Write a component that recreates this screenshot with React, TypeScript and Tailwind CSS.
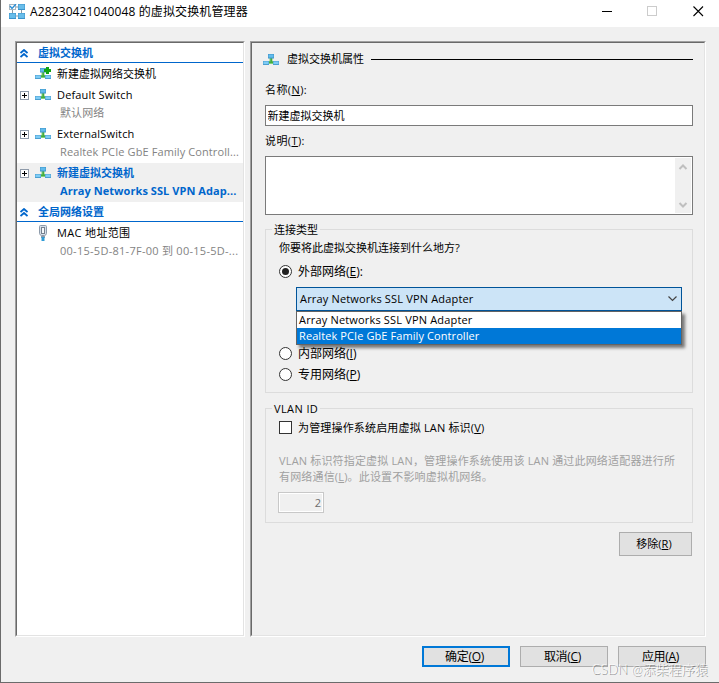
import { useState } from "react";
import type { ReactNode } from "react";

const adapters = ["Array Networks SSL VPN Adapter", "Realtek PCIe GbE Family Controller"];

function SwitchIcon({ plus = false }: { plus?: boolean }) {
    return (
        <svg width="16" height="14" viewBox="0 0 16 14" className="block shrink-0">
            <path d="M6.500 5h3v3h2v3h-7V8h2z" fill="#7fd07a" />
            <path d="M7.500 5h1.500v3.500h2v1.500H5V8.500h2.500z" fill="#45ab40" />
            <rect x="5" y="1" width="6" height="4.500" fill="#3f94c9" />
            <rect x="5.500" y="1.500" width="5" height="3" fill="#62bbec" />
            <rect x="0" y="8" width="6" height="4" fill="#4b9fd0" />
            <rect x="0.500" y="8.500" width="5" height="2.500" fill="#7fccf5" />
            <rect x="10" y="8" width="6" height="4" fill="#4b9fd0" />
            <rect x="10.500" y="8.500" width="5" height="2.500" fill="#7fccf5" />
            {plus && <path d="M11 0h3v2h2v3h-2v2h-3V5H9V2h2z" fill="#12a514" />}
        </svg>
    );
}

function ManagerIcon() {
    return (
        <svg width="16" height="15" viewBox="0 0 16 15" className="block shrink-0">
            <path d="M3.500 6v4M12.500 5v5M6 12h4M6 3h4" stroke="#8a9aa5" strokeWidth="1" fill="none" />
            <rect x="0.5" y="0.5" width="6" height="5" fill="#fff" stroke="#a9b8c2" />
            <path d="M1 2l2 2.500L7 0" stroke="#2d8fd5" strokeWidth="1.400" fill="none" />
            <rect x="9" y="0" width="7" height="6" fill="#3c93cb" />
            <rect x="9.500" y="0.500" width="6" height="4.500" fill="#69bdea" />
            <rect x="0" y="9" width="7" height="6" fill="#3c93cb" />
            <rect x="0.500" y="9.500" width="6" height="4.500" fill="#69bdea" />
            <rect x="9" y="9" width="7" height="6" fill="#3c93cb" />
            <rect x="9.500" y="9.500" width="6" height="4.500" fill="#69bdea" />
        </svg>
    );
}

function PlugIcon() {
    return (
        <svg width="16" height="16" viewBox="0 0 16 16" className="block shrink-0">
            <path d="M4.500 1.500q0-1 1-1h5q1 0 1 1v7q0 1.500-2 2h-3q-2-.5-2-2z" fill="#d5dee8" stroke="#8d9aaa" />
            <rect x="6.500" y="2.500" width="3" height="6" fill="#f4f7fa" stroke="#76818f" />
            <rect x="6" y="11" width="4" height="2" fill="#8d9aaa" />
            <rect x="6.500" y="12" width="3" height="4" fill="#2f9bd6" />
        </svg>
    );
}

function Expander() {
    return (
        <svg width="9" height="9" viewBox="0 0 9 9" className="block shrink-0">
            <rect x="0.5" y="0.5" width="8" height="8" fill="#fff" stroke="#8f9baa" />
            <path d="M2 4.500h5M4.500 2v5" stroke="#000" />
        </svg>
    );
}

function SectionHeader({ children }: { children: ReactNode }) {
    return (
        <div className="flex h-5 items-center border-b border-[#0066cc] pt-px pl-[3px] font-bold text-[#0066cc]">
            <svg width="8" height="9" viewBox="0 0 8 9" className="mr-[10px] block shrink-0">
                <path d="M0.500 4L4 1L7.500 4M0.500 8L4 5L7.500 8" stroke="#0066cc" strokeWidth="1.800" fill="none" />
            </svg>
            {children}
        </div>
    );
}

type TreeItemProps = {
    icon: ReactNode;
    title: ReactNode;
    sub: ReactNode;
    expandable?: boolean;
    selected?: boolean;
};

function TreeItem({ icon, title, sub, expandable, selected }: TreeItemProps) {
    return (
        <div className={selected ? "h-[39px] bg-[#f0f0f0] font-bold text-[#0066cc]" : "h-[39px]"}>
            <div className="flex h-5 items-center pl-[3px]">
                <div className="w-[15px]">{expandable && <Expander />}</div>
                {icon}
                <span className={selected ? "ml-[6px]" : "ml-[6px] tracking-[0.15px]"}>{title}</span>
            </div>
            <div className={selected ? "h-[17px] pl-[43px] leading-[15px] tracking-[0.06px]" : "h-[17px] pl-[43px] leading-[15px] tracking-[0.1px] text-[#838383]"}>
                {sub}
            </div>
        </div>
    );
}

function Panel({ className, children }: { className: string; children: ReactNode }) {
    return (
        <div className={"border border-t-[#a0a0a0] border-r-white border-b-white border-l-[#a0a0a0] " + className}>
            <div className="h-full border border-t-[#696969] border-r-[#e3e3e3] border-b-[#e3e3e3] border-l-[#696969]">
                {children}
            </div>
        </div>
    );
}

function Radio({ checked, onClick, children }: { checked: boolean; onClick: () => void; children: ReactNode }) {
    return (
        <button onClick={onClick} className="flex h-[21px] items-center text-xs">
            <span className="mr-[6px] flex size-[13px] items-center justify-center rounded-full border border-[#333] bg-white">
                {checked && <span className="size-[7px] rounded-full bg-[#222]"></span>}
            </span>
            <span>{children}</span>
        </button>
    );
}

function App() {
    const [network, setNetwork] = useState("external");
    const [name, setName] = useState("新建虚拟交换机");
    const [hovered, setHovered] = useState(1);

    return (
        <div className="flex h-[683px] w-[719px] flex-col overflow-hidden border-b border-l border-[#6b6b6b] bg-[#f0f0f0] font-['Open_Sans','Noto_Sans_CJK_SC',sans-serif] text-[11px] whitespace-nowrap text-black">
            <div className="flex h-[27px] shrink-0 items-start bg-white">
                <div className="flex h-[23px] flex-1 items-center pl-2 text-xs tracking-[0.12px]">
                    <ManagerIcon />
                    <span className="ml-[5px]">A28230421040048 的虚拟交换机管理器</span>
                </div>
                <svg width="118" height="23" viewBox="0 0 118 23" className="block">
                    <path d="M1 11.500h10" stroke="#000" />
                    <rect x="46.500" y="6.500" width="9" height="9" fill="none" stroke="#ccc" />
                    <path d="M92.500 6.500l9.500 9.500M102 6.500l-9.500 9.500" stroke="#000" strokeWidth="1.100" />
                </svg>
            </div>

            <div className="mt-[14px] flex h-[596px] shrink-0 gap-x-[5px] pl-[14px]">
                <Panel className="w-[230px] bg-white">
                    <SectionHeader>虚拟交换机</SectionHeader>
                    <div className="flex h-[22px] items-center pl-[18px]">
                        <SwitchIcon plus />
                        <span className="ml-[6px]">新建虚拟网络交换机</span>
                    </div>
                    <TreeItem expandable icon={<SwitchIcon />} title="Default Switch" sub="默认网络" />
                    <TreeItem expandable icon={<SwitchIcon />} title="ExternalSwitch" sub="Realtek PCIe GbE Family Controll..." />
                    <TreeItem expandable selected icon={<SwitchIcon />} title="新建虚拟交换机" sub="Array Networks SSL VPN Adap..." />
                    <SectionHeader>全局网络设置</SectionHeader>
                    <div className="pt-px">
                        <TreeItem
                            icon={<PlugIcon />}
                            title={<span className="tracking-[0.35px]">MAC 地址范围</span>}
                            sub={<span className="tracking-[0.27px]">00-15-5D-81-7F-00 到 00-15-5D-...</span>}
                        />
                    </div>
                </Panel>

                <Panel className="w-[456px]">
                    <div className="flex h-full flex-col pr-[11px] pl-[13px]">
                        <div className="-ml-[2px] flex h-[33px] shrink-0 items-center">
                            <SwitchIcon />
                            <span className="ml-[8px]">虚拟交换机属性</span>
                            <span className="ml-[7px] h-px flex-1 bg-black"></span>
                        </div>

                        <label className="mt-[4px] h-[20px] leading-[20px] tracking-[0.4px]">名称(<u>N</u>):</label>
                        <input
                            value={name}
                            onChange={(e) => setName(e.target.value)}
                            className="mt-[5px] h-[21px] shrink-0 border border-[#7a7a7a] bg-white px-[1.500px] pb-[2px] outline-none"
                        />
                        <label className="mt-[5px] h-[20px] leading-[20px] tracking-[0.4px]">说明(<u>T</u>):</label>
                        <div className="mt-[5px] flex h-[59px] shrink-0 border border-[#7a7a7a] bg-white p-px">
                            <textarea className="flex-1 resize-none outline-none"></textarea>
                            <svg width="16" height="55" viewBox="0 0 16 55" className="block bg-[#f0f0f0]">
                                <path d="M4.500 11L8 7.500L11.500 11M4.500 45L8 48.500L11.500 45" stroke="#bfbfbf" strokeWidth="2" fill="none" />
                            </svg>
                        </div>

                        <div className="mt-[14px] h-[164px] shrink-0 border border-[#dcdcdc] px-[13px]">
                            <div className="-mt-[9px] -ml-[7px] w-fit bg-[#f0f0f0] px-[2px] leading-[18px]">连接类型</div>
                            <div className="h-[18px] leading-[18px]">你要将此虚拟交换机连接到什么地方?</div>
                            <div className="mt-[4px]">
                                <Radio checked={network === "external"} onClick={() => setNetwork("external")}>
                                    外部网络(<u>E</u>):
                                </Radio>
                            </div>
                            <div className="relative mt-[5px] -mr-[3px] ml-[17px] flex h-6 items-center justify-between border border-[#005499] bg-[#cce4f7] pr-1 pl-[3px] tracking-[0.17px]">
                                {adapters[0]}
                                <svg width="9" height="6" viewBox="0 0 9 6" className="block">
                                    <path d="M0.500 0.500L4.500 4.500L8.500 0.500" stroke="#444" strokeWidth="1.200" fill="none" />
                                </svg>
                                <div className="absolute top-[23px] -right-px -left-px border border-[#646464] bg-white shadow-[3px_3px_3px_rgba(0,0,0,0.5)]">
                                    {adapters.map((adapter, i) => (
                                        <div
                                            key={adapter}
                                            onMouseEnter={() => setHovered(i)}
                                            className={i === hovered ? "h-4 bg-[#0078d7] pl-[2px] leading-4 tracking-[0.09px] text-white" : "h-4 pl-[2px] leading-4"}
                                        >
                                            {adapter}
                                        </div>
                                    ))}
                                </div>
                            </div>
                            <div className="mt-[32px]">
                                <Radio checked={network === "internal"} onClick={() => setNetwork("internal")}>
                                    内部网络(<u>I</u>)
                                </Radio>
                                <Radio checked={network === "private"} onClick={() => setNetwork("private")}>
                                    专用网络(<u>P</u>)
                                </Radio>
                            </div>
                        </div>

                        <div className="mt-[15px] h-[115px] shrink-0 border border-[#dcdcdc] px-[13px]">
                            <div className="-mt-[9px] -ml-[7px] w-fit bg-[#f0f0f0] px-[2px] leading-[18px] tracking-[0.4px]">VLAN ID</div>
                            <div className="flex h-[19px] items-center">
                                <span className="mr-[6px] size-[13px] border border-[#333] bg-white"></span>
                                <span className="pt-px tracking-[0.17px]">为管理操作系统启用虚拟 LAN 标识(<u>V</u>)</span>
                            </div>
                            <div className="mt-[16px] leading-4 tracking-[0.17px] text-[#a0a0a0]">
                                VLAN 标识符指定虚拟 LAN，管理操作系统使用该 LAN 通过此网络适配器进行所
                                <br />
                                有网络通信(<u>L</u>)。此设置不影响虚拟机网络。
                            </div>
                            <div className="mt-[7px] -ml-px h-[21px] w-[46px] border border-[#c8c8c8] bg-white p-px">
                                <div className="h-full bg-[#f0f0f0] pr-px text-right leading-[17px] text-[#6d6d6d]">2</div>
                            </div>
                        </div>

                        <button className="mt-[9px] mr-px h-6 w-[73px] shrink-0 self-end border border-[#adadad] bg-[#e1e1e1] pr-[3px]">
                            移除(<u>R</u>)
                        </button>
                    </div>
                </Panel>
            </div>

            <div className="relative mt-[9px] flex shrink-0 gap-x-[10px] pl-[421px] text-xs tracking-[-0.3px]">
                <button className="h-[21px] w-[88px] border-2 border-[#0078d7] bg-[#e1e1e1] pr-[3px] leading-none">确定(<u>O</u>)</button>
                <button className="h-[21px] w-[88px] border border-[#adadad] bg-[#e1e1e1] pr-[3px] leading-none">取消(<u>C</u>)</button>
                <button className="h-[21px] w-[88px] border border-[#adadad] bg-[#e1e1e1] pr-[3px] leading-none">应用(<u>A</u>)</button>
                <div className="absolute top-[14px] right-[11px] font-['Lato','Noto_Sans_CJK_SC',sans-serif] text-[13px] leading-[18px] font-light tracking-[0.15px] text-white/80 [text-shadow:1px_1px_0_rgba(90,90,90,0.65)]">
                    CSDN @添柴程序猿
                </div>
            </div>
        </div>
    );
}

export default App;
